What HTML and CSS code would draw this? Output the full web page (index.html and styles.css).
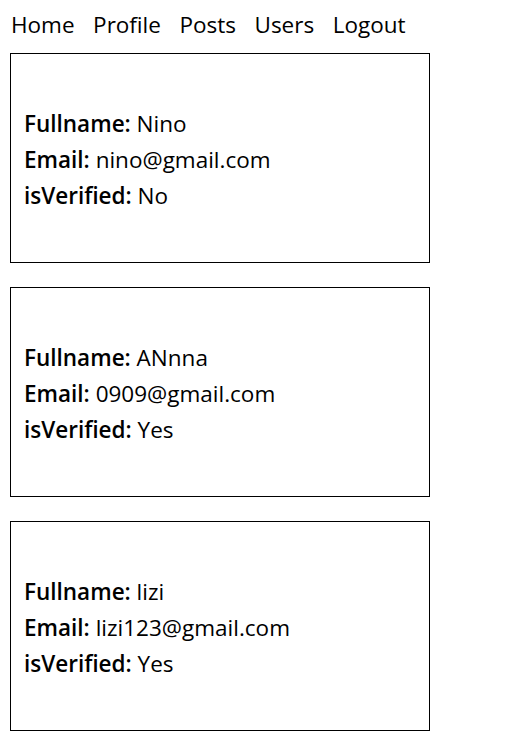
FILE: index.html
```html
<!DOCTYPE html>
<html>
<head>
<meta charset="utf-8">
<link rel="stylesheet" href="styles.css">
</head>
<body>
<nav class="nav">
  <a class="nav-link">Home</a>
  <a class="nav-link">Profile</a>
  <a class="nav-link">Posts</a>
  <a class="nav-link">Users</a>
  <a class="nav-link">Logout</a>
</nav>
<div class="users">
  <div class="card">
    <div class="row"><b>Fullname:</b> Nino</div>
    <div class="row"><b>Email:</b> nino@gmail.com</div>
    <div class="row"><b>isVerified:</b> No</div>
  </div>
  <div class="card">
    <div class="row"><b>Fullname:</b> ANnna</div>
    <div class="row"><b>Email:</b> 0909@gmail.com</div>
    <div class="row"><b>isVerified:</b> Yes</div>
  </div>
  <div class="card">
    <div class="row"><b>Fullname:</b> lizi</div>
    <div class="row"><b>Email:</b> lizi123@gmail.com</div>
    <div class="row"><b>isVerified:</b> Yes</div>
  </div>
</div>
</body>
</html>
```
FILE: styles.css
```css
html, body {
  margin: 0;
  padding: 0;
  background: #fff;
}
body {
  font-family: "Open Sans", "Noto Sans", sans-serif;
  font-size: 22.5px;
  color: #000;
  padding: 0 10px;
}
.nav {
  display: flex;
  gap: 18.5px;
  padding-left: 1px;
  height: 53px;
  align-items: flex-start;
  padding-top: 7px;
  box-sizing: border-box;
}
.nav-link {
  color: #000;
  text-decoration: none;
  line-height: 36px;
}
.users {
  display: flex;
  flex-direction: column;
  gap: 24px;
}
.card {
  width: 420px;
  height: 210px;
  box-sizing: border-box;
  border: 1px solid #000;
  padding: 52px 13px 0;
}
.row {
  line-height: 36px;
}
.row b {
  font-weight: 600;
}
```
